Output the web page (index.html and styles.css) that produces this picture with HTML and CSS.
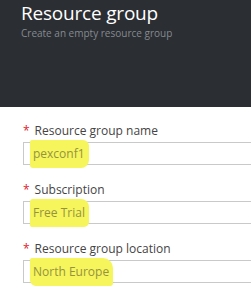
FILE: index.html
```html
<!DOCTYPE html>
<html lang="en">
<head>
  <meta charset="UTF-8">
  <title>Resource group</title>
  <link rel="stylesheet" href="styles.css">
</head>
<body>
  <header class="blade-header">
    <h1 class="blade-title">Resource group</h1>
    <div class="blade-subtitle">Create an empty resource group</div>
  </header>

  <main class="blade-form">
    <div class="field">
      <label class="field-label"><span class="req">*</span>Resource group name</label>
      <div class="field-box"><span class="mark mark-a">pexconf1</span></div>
    </div>

    <div class="field">
      <label class="field-label"><span class="req">*</span>Subscription</label>
      <div class="field-box"><span class="mark mark-b">Free Trial</span></div>
    </div>

    <div class="field">
      <label class="field-label"><span class="req">*</span>Resource group location</label>
      <div class="field-box"><span class="mark mark-c">North Europe</span></div>
    </div>
  </main>
</body>
</html>
```

FILE: styles.css
```css
body {
  margin: 0;
  font-family: 'Open Sans', 'Noto Sans', sans-serif;
  background: #fff;
}
.blade-header {
  background: #2b2e33;
  height: 107px;
  box-sizing: border-box;
  padding: 1px 0 0 21px;
}
.blade-title {
  margin: 0;
  font-size: 19px;
  font-weight: 400;
  line-height: 25px;
  color: #fff;
  letter-spacing: -0.2px;
}
.blade-subtitle {
  font-size: 10px;
  line-height: 14px;
  color: #858a90;
}
.blade-form {
  padding: 16px 0 0 23px;
}
.field {
  margin-bottom: 17px;
}
.field-label {
  display: block;
  font-size: 12px;
  line-height: 16px;
  color: #444;
  margin-bottom: 3px;
}
.req {
  color: #e0202a;
  margin-right: 5px;
}
/* box runs off the right edge of the blade, so no right border */
.field-box {
  height: 23px;
  box-sizing: border-box;
  border: 1px solid #c9c9c9;
  border-right: none;
  display: flex;
  align-items: center;
  padding-left: 6px;
}
.mark {
  background: #f6f55c;
  color: #95933f;
  font-size: 12px;
  line-height: 28px;
  padding: 0 4px 0 3px;
  margin: -4px 0;
}
.mark-a {
  border-radius: 2px 6px 8px 3px;
}
.mark-b {
  border-radius: 3px 8px 5px 2px;
}
.mark-c {
  border-radius: 2px 10px 3px 6px;
}
```
